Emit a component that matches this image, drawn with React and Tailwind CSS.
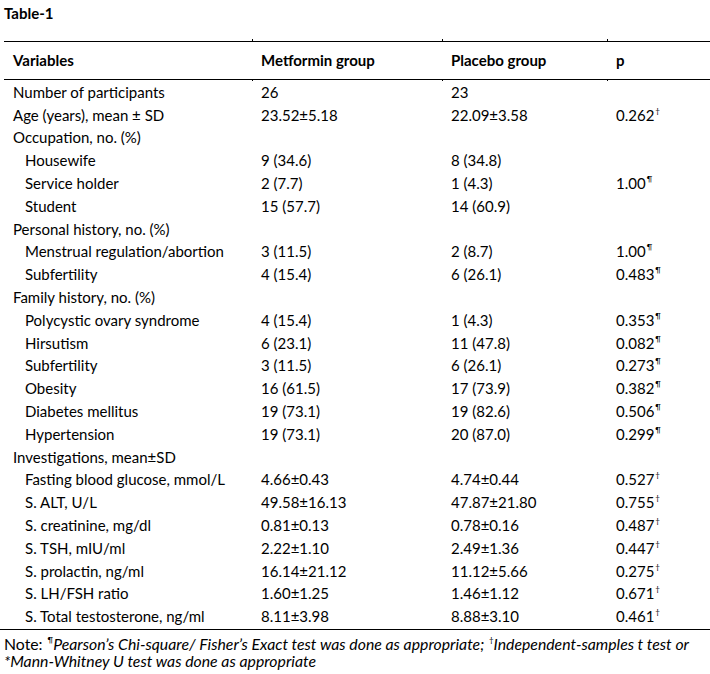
import React from 'react';

// Baseline characteristics table
const rows = [
  { label: 'Number of participants', m: '26', pl: '23' },
  { label: 'Age (years), mean ± SD', m: '23.52±5.18', pl: '22.09±3.58', p: '0.262', s: '†' },
  { label: 'Occupation, no. (%)' },
  { label: 'Housewife', sub: true, m: '9 (34.6)', pl: '8 (34.8)' },
  { label: 'Service holder', sub: true, m: '2 (7.7)', pl: '1 (4.3)', p: '1.00', s: '¶' },
  { label: 'Student', sub: true, m: '15 (57.7)', pl: '14 (60.9)' },
  { label: 'Personal history, no. (%)' },
  { label: 'Menstrual regulation/abortion', sub: true, m: '3 (11.5)', pl: '2 (8.7)', p: '1.00', s: '¶' },
  { label: 'Subfertility', sub: true, m: '4 (15.4)', pl: '6 (26.1)', p: '0.483', s: '¶' },
  { label: 'Family history, no. (%)' },
  { label: 'Polycystic ovary syndrome', sub: true, m: '4 (15.4)', pl: '1 (4.3)', p: '0.353', s: '¶' },
  { label: 'Hirsutism', sub: true, m: '6 (23.1)', pl: '11 (47.8)', p: '0.082', s: '¶' },
  { label: 'Subfertility', sub: true, m: '3 (11.5)', pl: '6 (26.1)', p: '0.273', s: '¶' },
  { label: 'Obesity', sub: true, m: '16 (61.5)', pl: '17 (73.9)', p: '0.382', s: '¶' },
  { label: 'Diabetes mellitus', sub: true, m: '19 (73.1)', pl: '19 (82.6)', p: '0.506', s: '¶' },
  { label: 'Hypertension', sub: true, m: '19 (73.1)', pl: '20 (87.0)', p: '0.299', s: '¶' },
  { label: 'Investigations, mean±SD' },
  { label: 'Fasting blood glucose, mmol/L', sub: true, m: '4.66±0.43', pl: '4.74±0.44', p: '0.527', s: '†' },
  { label: 'S. ALT, U/L', sub: true, m: '49.58±16.13', pl: '47.87±21.80', p: '0.755', s: '†' },
  { label: 'S. creatinine, mg/dl', sub: true, m: '0.81±0.13', pl: '0.78±0.16', p: '0.487', s: '†' },
  { label: 'S. TSH, mIU/ml', sub: true, m: '2.22±1.10', pl: '2.49±1.36', p: '0.447', s: '†' },
  { label: 'S. prolactin, ng/ml', sub: true, m: '16.14±21.12', pl: '11.12±5.66', p: '0.275', s: '†' },
  { label: 'S. LH/FSH ratio', sub: true, m: '1.60±1.25', pl: '1.46±1.12', p: '0.671', s: '†' },
  { label: 'S. Total testosterone, ng/ml', sub: true, m: '8.11±3.98', pl: '8.88±3.10', p: '0.461', s: '†' },
];

const cols = 'grid grid-cols-[248px_190px_165px_103px]';

const Mark = ({ s }) => (
  <sup className="text-[8px] leading-none -top-[7px] ml-px">{s}</sup>
);

export default function App() {
  return (
    <div
      className="w-[710px] h-[674px] bg-white text-black text-[15px] leading-none overflow-hidden"
      style={{ fontFamily: 'Lato, "Liberation Sans", sans-serif' }}
    >
      <div className="h-[26px] pl-[4px] pt-[6px] font-bold">Table-1</div>
      <div className="ml-[4px] mt-[13px]">
        {/* tiny column ticks above the top rule */}
        <div className={`${cols} h-[2px]`}>
          <div />
          <div className="border-l border-black" />
          <div className="border-l border-black" />
          <div className="border-l border-black" />
        </div>
        {/* Header */}
        <div className={`${cols} border-t border-b border-black h-[39px] items-center font-bold`}>
          <div className="pl-[9px]">Variables</div>
          <div className="pl-[9px]">Metformin group</div>
          <div className="pl-[9px]">Placebo group</div>
          <div className="pl-[9px]">p</div>
        </div>
        <div className={`${cols} h-[1px]`}>
          <div />
          <div className="border-l border-black" />
          <div className="border-l border-black" />
          <div className="border-l border-black" />
        </div>
        {/* Body */}
        <div className="border-b border-black -ml-[4px] pl-[4px] pb-[1px]">
          {rows.map((r, i) => (
            <div key={i} className={`${cols} h-[22.8px] items-center`}>
              <div className={r.sub ? 'pl-[21px]' : 'pl-[9px]'}>{r.label}</div>
              <div className="pl-[9px]">{r.m}</div>
              <div className="pl-[9px]">{r.pl}</div>
              <div className="pl-[9px]">
                {r.p}
                {r.s && <Mark s={r.s} />}
              </div>
            </div>
          ))}
        </div>
      </div>
      {/* Footnote */}
      <div className="pl-[4px] pt-[5px] text-[15.8px] leading-[17px] whitespace-nowrap">
        Note: <Mark s="¶" />
        <i>Pearson’s Chi-square/ Fisher’s Exact test was done as appropriate; </i>
        <Mark s="†" />
        <i>Independent-samples t test or</i>
        <br />
        <i>*Mann-Whitney U test was done as appropriate</i>
      </div>
    </div>
  );
}
